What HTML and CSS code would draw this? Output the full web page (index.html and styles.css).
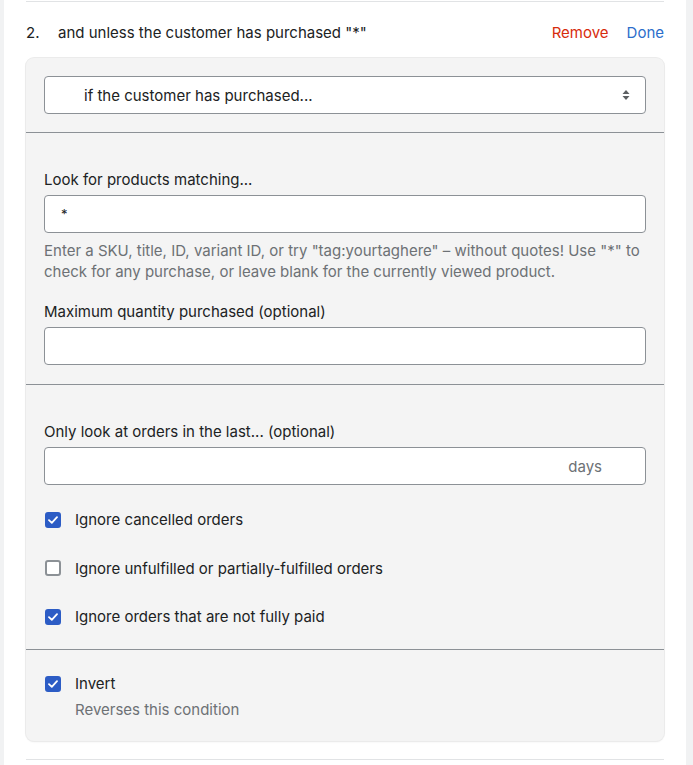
FILE: index.html
```html
<!DOCTYPE html>
<html>
<head>
<meta charset="utf-8">
<link rel="stylesheet" href="styles.css">
</head>
<body>
<div class="panel">
  <div class="item">
    <div class="header">
      <span class="num">2.</span>
      <span class="title">and unless the customer has purchased "*"</span>
      <span class="actions"><a class="remove">Remove</a><a class="done">Done</a></span>
    </div>
    <div class="card">
      <div class="section first">
        <div class="select">
          <span class="select-text">if the customer has purchased...</span>
          <svg class="arrows" width="8" height="12" viewBox="0 0 8 12"><path d="M4 1 L7.5 5 H0.5 Z M4 11 L0.5 7 H7.5 Z" fill="#5c5f62"/></svg>
        </div>
      </div>
      <div class="section">
        <label class="label">Look for products matching...</label>
        <div class="input"><span class="value">*</span></div>
        <p class="help">Enter a SKU, title, ID, variant ID, or try "tag:yourtaghere" – without quotes! Use "*" to check for any purchase, or leave blank for the currently viewed product.</p>
        <label class="label second">Maximum quantity purchased (optional)</label>
        <div class="input"></div>
      </div>
      <div class="section orders">
        <label class="label">Only look at orders in the last... (optional)</label>
        <div class="input suffix"><span class="days">days</span></div>
        <div class="check"><span class="box on"><svg width="10" height="8" viewBox="0 0 10 8"><path d="M1 4.2 L3.8 6.8 L9 1.2" fill="none" stroke="#fff" stroke-width="1.8" stroke-linecap="round" stroke-linejoin="round"/></svg></span><span>Ignore cancelled orders</span></div>
        <div class="check"><span class="box"></span><span>Ignore unfulfilled or partially-fulfilled orders</span></div>
        <div class="check"><span class="box on"><svg width="10" height="8" viewBox="0 0 10 8"><path d="M1 4.2 L3.8 6.8 L9 1.2" fill="none" stroke="#fff" stroke-width="1.8" stroke-linecap="round" stroke-linejoin="round"/></svg></span><span>Ignore orders that are not fully paid</span></div>
      </div>
      <div class="section last">
        <div class="check invert"><span class="box on"><svg width="10" height="8" viewBox="0 0 10 8"><path d="M1 4.2 L3.8 6.8 L9 1.2" fill="none" stroke="#fff" stroke-width="1.8" stroke-linecap="round" stroke-linejoin="round"/></svg></span><span>Invert</span></div>
        <p class="sub">Reverses this condition</p>
      </div>
    </div>
  </div>
</div>
</body>
</html>
```

FILE: styles.css
```css
html, body {
  margin: 0;
  padding: 0;
  background: #f1f2f3;
}
body {
  font-family: Inter, "Noto Sans", sans-serif;
  font-size: 15px;
  color: #202223;
}
.panel {
  background: #fff;
  margin: 0 7px 0 4px;
  height: 765px;
  padding: 1px 22px 0;
  box-sizing: border-box;
}
.item {
  border-top: 1px solid #e1e3e5;
  border-bottom: 1px solid #e1e3e5;
  padding-bottom: 18px;
}
.header {
  display: flex;
  align-items: center;
  height: 20px;
  padding: 20px 0 16px 0;
}
.num { width: 32px; }
.title { flex: 1; }
.actions { display: flex; gap: 18px; }
.remove { color: #d72c0d; }
.done { color: #2c6ecb; }
.card {
  background: #f4f4f4;
  border-radius: 8px;
  box-shadow: 0 0 0 1px #ebebeb, 0 1px 2px rgba(0,0,0,0.08);
}
.section {
  padding: 37px 18px 19px;
  border-top: 1px solid #8c9196;
}
.section.orders { padding-bottom: 18px; }
.section.first {
  border-top: none;
  padding: 18px;
}
.select, .input {
  height: 38px;
  box-sizing: border-box;
  background: #fff;
  border: 1px solid #8c9196;
  border-radius: 4px;
  display: flex;
  align-items: center;
}
.select { padding: 0 15px 0 39px; }
.select-text { flex: 1; }
.label {
  display: block;
  line-height: 20px;
  margin-bottom: 5px;
}
.label.second { margin-top: 20px; }
.input { padding: 0 15px; }
.value { padding-left: 1px; color: #202223; font-size: 13px; }
.suffix { justify-content: flex-end; padding-right: 43px; }
.days { color: #6d7175; }
.help {
  margin: 7px 0 0;
  line-height: 21px;
  color: #6d7175;
}
.check {
  display: flex;
  align-items: center;
  gap: 14px;
  height: 28px;
  margin-top: 20.5px;
}
.check.invert { margin-top: 0; }
.box {
  width: 16px;
  height: 16px;
  box-sizing: border-box;
  border: 2px solid #8c9196;
  border-radius: 3px;
  background: #fff;
  margin-left: 1px;
  display: flex;
  align-items: center;
  justify-content: center;
}
.box.on {
  background: #2c5cc5;
  border-color: #2c5cc5;
}
.section.last { padding: 20px 18px 21px; }
.sub {
  margin: 2px 0 0 31px;
  line-height: 20px;
  color: #6d7175;
}
```
